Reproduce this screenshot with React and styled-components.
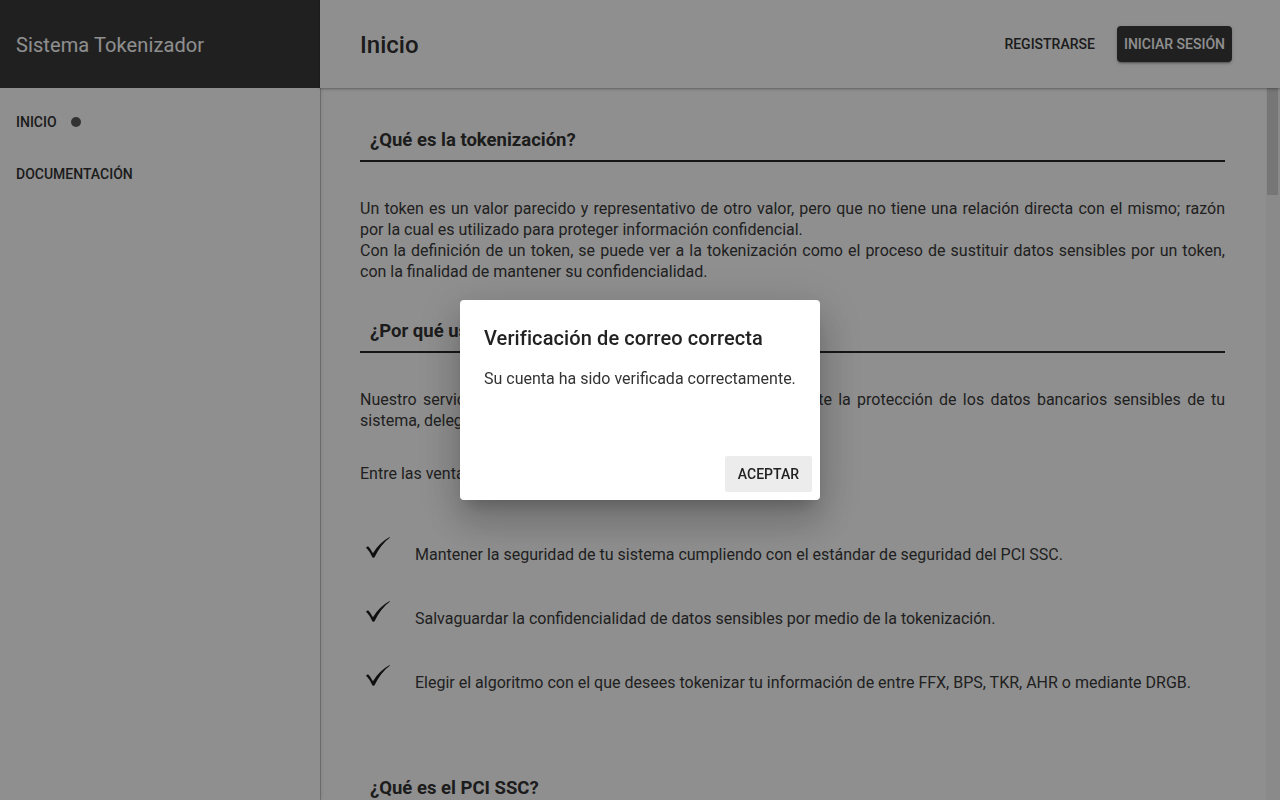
import React from "react";
import styled, { createGlobalStyle } from "styled-components";

const Global = createGlobalStyle`
  html, body { margin: 0; padding: 0; height: 100%; }
  body { font-family: Roboto, "Liberation Sans", Arial, sans-serif; color: #333; background: #fff; overflow: hidden; }
  * { box-sizing: border-box; }
`;

const Shell = styled.div`
  display: grid;
  grid-template-columns: 320px 1fr;
  height: 100vh;
  width: 100vw;
`;

const Drawer = styled.aside`
  display: flex;
  flex-direction: column;
  background: #fff;
  box-shadow: 1px 0 0 rgba(0, 0, 0, 0.2), 2px 0 3px rgba(0, 0, 0, 0.08);
  z-index: 1;
`;

const Brand = styled.div`
  height: 88px;
  display: flex;
  align-items: center;
  padding: 2px 16px 0;
  background: #393939;
  color: #fff;
  font-size: 20px;
  font-weight: 400;
  letter-spacing: 0.1px;
`;

const Nav = styled.nav`
  display: flex;
  flex-direction: column;
  padding-top: 8px;
`;

const NavItem = styled.a`
  display: flex;
  align-items: center;
  gap: 14px;
  height: 52px;
  padding: 0 16px;
  font-size: 14px;
  font-weight: 500;
  text-transform: uppercase;
  color: #333;
  text-decoration: none;
`;

const Dot = styled.span`
  width: 10px;
  height: 10px;
  border-radius: 50%;
  background: #5a5a5a;
`;

const Main = styled.div`
  display: flex;
  flex-direction: column;
  min-width: 0;
  min-height: 0;
`;

const TopBar = styled.header`
  position: relative;
  height: 88px;
  flex: none;
  display: flex;
  align-items: center;
  justify-content: space-between;
  padding: 0 48px 0 40px;
  background: #fff;
  box-shadow: 0 1px 2px rgba(0, 0, 0, 0.25), 0 2px 4px rgba(0, 0, 0, 0.08);
  z-index: 2;
`;

const PageTitle = styled.h1`
  margin: 0;
  padding-top: 2px;
  font-size: 24px;
  font-weight: 500;
  color: #303030;
`;

const Actions = styled.div`
  display: flex;
  align-items: center;
  gap: 15px;
`;

const Button = styled.button`
  height: 36px;
  padding: 0 7px;
  border: none;
  border-radius: 4px;
  font-family: inherit;
  font-size: 14px;
  font-weight: 500;
  text-transform: uppercase;
  cursor: pointer;
  background: ${(p) => (p.$dark ? "#393939" : "transparent")};
  color: ${(p) => (p.$dark ? "#fff" : "#333")};
  box-shadow: ${(p) =>
    p.$dark ? "0 3px 1px -2px rgba(0,0,0,.2), 0 2px 2px 0 rgba(0,0,0,.14), 0 1px 5px 0 rgba(0,0,0,.12)" : "none"};
`;

const ScrollArea = styled.div`
  position: relative;
  flex: 1;
  min-height: 0;
`;

const Scroller = styled.main`
  height: 100%;
  overflow-y: auto;
  scrollbar-width: none;
  &::-webkit-scrollbar { display: none; }
`;

const ScrollTrack = styled.div`
  position: absolute;
  top: 0;
  right: 0;
  bottom: 0;
  width: 14px;
  background: #f6f6f6;
  padding: 0 2px 0 1px;
`;

const ScrollThumb = styled.div`
  background: #d2d2d2;
`;

const Article = styled.article`
  padding: 40px 55px 80px 40px;
  min-height: 4738px;
`;

const SectionTitle = styled.h3`
  margin: ${(p) => p.$top || "0"} 0 0;
  padding: 0 10px 8px;
  font-size: 18.5px;
  line-height: 24px;
  font-weight: 700;
  color: #333;
  border-bottom: ${(p) => (p.$plain ? "none" : "2px solid #262626")};
`;

const Para = styled.p`
  margin: ${(p) => p.$top || "36px"} 0 0;
  font-size: 16px;
  line-height: 21px;
  text-align: justify;
  color: #3a3a3a;
`;

const CheckList = styled.ul`
  list-style: none;
  margin: 38px 0 0;
  padding: 0;
`;

const CheckItem = styled.li`
  display: flex;
  align-items: center;
  height: 64px;
`;

const CheckIcon = styled.svg`
  width: 24px;
  height: 21px;
  flex: none;
  margin: -14px 25px 0 6px;
  fill: #1c1c1c;
`;

const ItemText = styled.span`
  font-size: 16px;
  line-height: 21px;
  color: #3a3a3a;
`;

const Overlay = styled.div`
  position: fixed;
  inset: 0;
  background: rgba(0, 0, 0, 0.44);
  z-index: 10;
  display: flex;
  align-items: center;
  justify-content: center;
`;

const Dialog = styled.div`
  width: 360px;
  height: 200px;
  background: #fff;
  border-radius: 4px;
  display: flex;
  flex-direction: column;
  box-shadow: 0 11px 15px -7px rgba(0, 0, 0, 0.2), 0 24px 38px 3px rgba(0, 0, 0, 0.14),
    0 9px 46px 8px rgba(0, 0, 0, 0.12);
`;

const DialogTitle = styled.h2`
  margin: 0;
  padding: 24px 24px 0;
  font-size: 20px;
  line-height: 28px;
  font-weight: 500;
  color: #222;
  letter-spacing: 0.1px;
`;

const DialogText = styled.p`
  margin: 15px 0 0;
  padding: 0 24px;
  font-size: 16px;
  line-height: 24px;
  color: #333;
`;

const DialogActions = styled.div`
  margin-top: auto;
  display: flex;
  justify-content: flex-end;
  padding: 8px;
`;

const FlatButton = styled.button`
  height: 36px;
  padding: 0 13px;
  border: none;
  border-radius: 2px;
  background: #ececec;
  color: #222;
  font-family: inherit;
  font-size: 14px;
  font-weight: 500;
  text-transform: uppercase;
  cursor: pointer;
`;

const Check = () => (
  <CheckIcon viewBox="0 0 24 21" aria-hidden="true">
    <path d="M0 10.6 Q1.2 9.4 2.3 9.6 Q4.4 11.6 6.9 16.2 Q13 6 23.6 0 L24 0.5 Q14.5 7.5 8.4 20.6 L6.6 20.8 Q4 14.6 0 10.6 Z" />
  </CheckIcon>
);

const ventajas = [
  "Mantener la seguridad de tu sistema cumpliendo con el estándar de seguridad del PCI SSC.",
  "Salvaguardar la confidencialidad de datos sensibles por medio de la tokenización.",
  "Elegir el algoritmo con el que desees tokenizar tu información de entre FFX, BPS, TKR, AHR o mediante DRGB.",
];

export default function App() {
  return (
    <>
      <Global />
      <Shell>
        <Drawer>
          <Brand>Sistema Tokenizador</Brand>
          <Nav>
            <NavItem>
              Inicio <Dot />
            </NavItem>
            <NavItem>Documentación</NavItem>
          </Nav>
        </Drawer>
        <Main>
          <TopBar>
            <PageTitle>Inicio</PageTitle>
            <Actions>
              <Button>Registrarse</Button>
              <Button $dark>Iniciar sesión</Button>
            </Actions>
          </TopBar>
          <ScrollArea>
            <Scroller>
              <Article>
                <SectionTitle>¿Qué es la tokenización?</SectionTitle>
                <Para>
                  Un token es un valor parecido y representativo de otro valor, pero que no tiene una relación directa
                  con el mismo; razón por la cual es utilizado para proteger información confidencial.
                  <br />
                  Con la definición de un token, se puede ver a la tokenización como el proceso de sustituir datos
                  sensibles por un token, con la finalidad de mantener su confidencialidad.
                </Para>
                <SectionTitle $top="37px">¿Por qué usar nuestro servicio?</SectionTitle>
                <Para>
                  Nuestro servicio de tokenización te ayuda a simplificar bastante la protección de los datos bancarios
                  sensibles de tu sistema, delegando la responsabilidad a nuestra plataforma.
                </Para>
                <Para $top="32px">Entre las ventajas que te ofrecemos se encuentran:</Para>
                <CheckList>
                  {ventajas.map((v) => (
                    <CheckItem key={v}>
                      <Check />
                      <ItemText>{v}</ItemText>
                    </CheckItem>
                  ))}
                </CheckList>
                <SectionTitle $top="62px" $plain>
                  ¿Qué es el PCI SSC?
                </SectionTitle>
                <Para>
                  El PCI SSC (Payment Card Industry Security Standards Council) es el consejo encargado de desarrollar y
                  mantener los estándares de seguridad para la protección de los datos de tarjetas de pago.
                </Para>
              </Article>
            </Scroller>
            <ScrollTrack aria-hidden="true">
              <ScrollThumb style={{ height: 107 }} />
            </ScrollTrack>
          </ScrollArea>
        </Main>
      </Shell>
      <Overlay>
        <Dialog role="dialog">
          <DialogTitle>Verificación de correo correcta</DialogTitle>
          <DialogText>Su cuenta ha sido verificada correctamente.</DialogText>
          <DialogActions>
            <FlatButton>Aceptar</FlatButton>
          </DialogActions>
        </Dialog>
      </Overlay>
    </>
  );
}
